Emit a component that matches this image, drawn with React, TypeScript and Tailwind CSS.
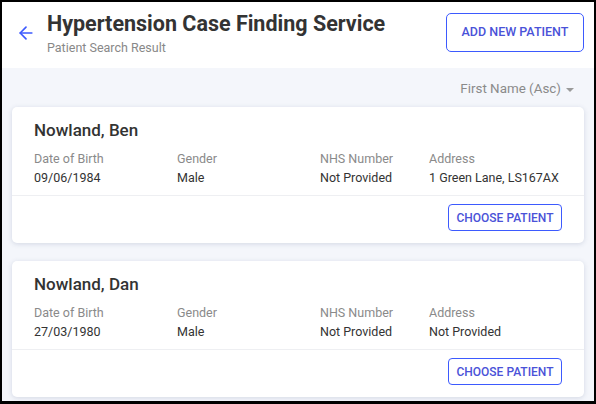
import { ArrowLeft } from 'lucide-react';

type Patient = {
  name: string;
  dob: string;
  gender: string;
  nhs: string;
  address: string;
};

const patients: Patient[] = [
  { name: 'Nowland, Ben', dob: '09/06/1984', gender: 'Male', nhs: 'Not Provided', address: '1 Green Lane, LS167AX' },
  { name: 'Nowland, Dan', dob: '27/03/1980', gender: 'Male', nhs: 'Not Provided', address: 'Not Provided' },
];

function Field({ label, value, width }: { label: string; value: string; width: string }) {
  return (
    <div className={`${width} shrink-0`}>
      <div className="text-[12.5px] leading-[16px] text-[#8a8a8a]">{label}</div>
      <div className="text-[12.5px] leading-[18px] mt-[2px] text-[#333]">{value}</div>
    </div>
  );
}

function PatientCard({ p }: { p: Patient }) {
  return (
    <div className="bg-white rounded-[5px] shadow-[0_1px_5px_rgba(60,80,120,0.18)]">
      <div className="pl-[22px] pr-[22px] pt-[12px] pb-[8px]">
        <div className="text-[17px] leading-[22px] font-medium text-[#333]">{p.name}</div>
        <div className="flex mt-[10px]">
          <Field label="Date of Birth" value={p.dob} width="w-[143px]" />
          <Field label="Gender" value={p.gender} width="w-[143px]" />
          <Field label="NHS Number" value={p.nhs} width="w-[109px]" />
          <Field label="Address" value={p.address} width="w-[150px]" />
        </div>
      </div>
      <div className="border-t border-[#eeeff2] flex justify-end pr-[22px] pt-[8px] pb-[12px]">
        <button className="h-[27px] w-[114px] rounded-[4px] border border-[#3d5afe] text-[12px] font-medium text-[#4a52d8]">
          CHOOSE PATIENT
        </button>
      </div>
    </div>
  );
}

export default function App() {
  return (
    <div
      className="w-[596px] h-[404px] overflow-hidden border-l-2 border-r-2 border-t-2 border-b-[3px] border-black bg-[#f4f6fb] flex flex-col"
      style={{ fontFamily: 'Roboto, "Liberation Sans", sans-serif' }}
    >
      {/* Header */}
      <div className="bg-white h-[66px] shrink-0 flex items-start pl-[14px] pr-[10px]">
        <ArrowLeft size={20} strokeWidth={2} className="text-[#3d5afe] mt-[21px] shrink-0" />
        <div className="ml-[11px] mt-[8px] flex-1">
          <div className="text-[21.5px] leading-[28px] font-bold text-[#333]">Hypertension Case Finding Service</div>
          <div className="text-[12.5px] leading-[14px] mt-[3px] text-[#888]">Patient Search Result</div>
        </div>
        <button className="mt-[11px] h-[39px] w-[138px] rounded-[5px] border border-[#3d5afe] text-[12.5px] font-medium text-[#4a52d8] shrink-0">
          ADD NEW PATIENT
        </button>
      </div>

      {/* Sort */}
      <div className="flex justify-end items-center pr-[20px] pt-[4px] h-[39px] shrink-0">
        <span className="text-[13.4px] text-[#8a8a8a]">First Name (Asc)</span>
        <svg width="8" height="4" viewBox="0 0 8 4" className="ml-[5px]">
          <path d="M0 0 L8 0 L4 4 Z" fill="#9a9a9a" />
        </svg>
      </div>

      {/* Results */}
      <div className="flex flex-col gap-[18px] px-[10px]">
        {patients.map((p) => (
          <PatientCard key={p.name} p={p} />
        ))}
      </div>
    </div>
  );
}
